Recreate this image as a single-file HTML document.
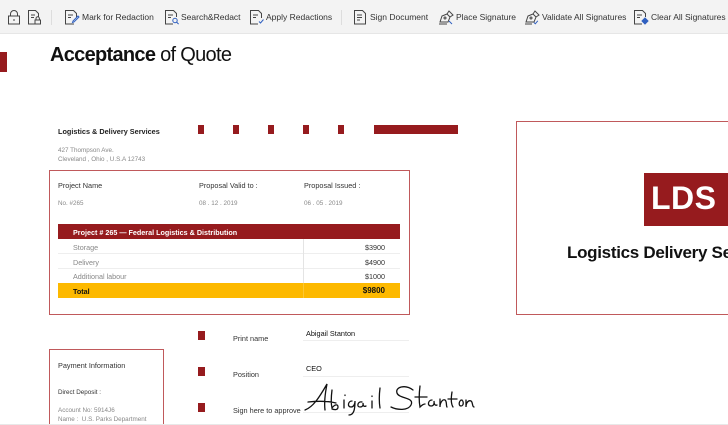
<!DOCTYPE html>
<html style="overflow:hidden"><head><meta charset="utf-8"><style>
*{margin:0;padding:0;box-sizing:border-box}
html,body{width:728px;height:425px;overflow:hidden}
body{background:#fff;font-family:"Liberation Sans",sans-serif;position:relative;color:#222}
.tb{position:absolute;left:0;top:0;width:728px;height:34px;background:#f3f3f3;border-bottom:1px solid #e6e6e6}
.ti{position:absolute;top:12px;font-size:8.5px;color:#333;white-space:nowrap;font-family:"Liberation Sans",sans-serif}
.ic{position:absolute;top:9px}
.a{position:absolute;white-space:nowrap}
.r{position:absolute;background:#961b1e}
</style></head><body>
<div class="tb">
<svg class="ic" style="left:6px" width="16" height="16" viewBox="0 0 16 16" fill="none" stroke="#444" stroke-width="1"><path d="M4.5 7V5a3.5 3.5 0 0 1 7 0v2"/><rect x="2.5" y="7" width="11" height="8"/><path d="M8 10v2"/></svg>
<svg class="ic" style="left:26px" width="16" height="16" viewBox="0 0 16 16" fill="none" stroke="#444" stroke-width="1"><path d="M9 15H2.5V1.5h7l3 3V8"/><path d="M5 6h4M5 8.5h3"/><rect x="9" y="11" width="5.5" height="4"/><path d="M10 11V9.5a1.7 1.7 0 0 1 3.4 0V11"/></svg>
<div style="position:absolute;left:51px;top:10px;width:1px;height:15px;background:#ddd"></div>
<svg class="ic" style="left:64px" width="16" height="16" viewBox="0 0 16 16" fill="none" stroke="#444" stroke-width="1"><path d="M10 15H1.5V1.5h8l3 3V8"/><path d="M4 6h5M4 8.5h3"/><path d="M15 8l-5 5-1.5.5.5-1.5 5-5z" stroke="#3060c0"/></svg>
<span class="ti" style="left:82px">Mark for Redaction</span>
<svg class="ic" style="left:164px" width="16" height="16" viewBox="0 0 16 16" fill="none" stroke="#444" stroke-width="1"><path d="M9 15H1.5V1.5h8l3 3V8"/><path d="M4 6h5M4 8.5h3"/><circle cx="11" cy="11.5" r="2.2" stroke="#3060c0"/><path d="M12.6 13.1l2 2" stroke="#3060c0"/></svg>
<span class="ti" style="left:181px">Search&amp;Redact</span>
<svg class="ic" style="left:249px" width="16" height="16" viewBox="0 0 16 16" fill="none" stroke="#444" stroke-width="1"><path d="M9 15H1.5V1.5h8l3 3V9"/><path d="M4 6h5M4 8.5h3"/><path d="M10 12.5l1.5 1.5 3-3.5" stroke="#3060c0"/></svg>
<span class="ti" style="left:266px">Apply Redactions</span>
<div style="position:absolute;left:341px;top:10px;width:1px;height:15px;background:#ddd"></div>
<svg class="ic" style="left:353px" width="16" height="16" viewBox="0 0 16 16" fill="none" stroke="#444" stroke-width="1"><path d="M12.5 15H1.5V1.5h8l3 3z"/><path d="M4 6h5M4 8.5h5M4 11h3"/></svg>
<span class="ti" style="left:370px">Sign Document</span>
<svg class="ic" style="left:438px" width="16" height="16" viewBox="0 0 16 16" fill="none" stroke="#444" stroke-width="1"><path d="M2 13l2-6 5-2 3 3-2 5z"/><circle cx="7" cy="9" r="1"/><path d="M9 5l2-3 4 4-3 2M1 15h8"/><path d="M11 12l3 3" stroke="#3060c0"/></svg>
<span class="ti" style="left:456px">Place Signature</span>
<svg class="ic" style="left:524px" width="16" height="16" viewBox="0 0 16 16" fill="none" stroke="#444" stroke-width="1"><path d="M2 13l2-6 5-2 3 3-2 5z"/><circle cx="7" cy="9" r="1"/><path d="M9 5l2-3 4 4-3 2M1 15h7"/><path d="M10 13.5l1.3 1.3 2.5-3" stroke="#3060c0"/></svg>
<span class="ti" style="left:542px">Validate All Signatures</span>
<svg class="ic" style="left:633px" width="16" height="16" viewBox="0 0 16 16" fill="none" stroke="#444" stroke-width="1"><path d="M9 15H1.5V1.5h8l3 3V8"/><path d="M4 6h5M4 8.5h3"/><path d="M9 12l3-3 3 3-3 3z" fill="#3060c0" stroke="#3060c0"/></svg>
<span class="ti" style="left:651px">Clear All Signatures</span>
</div>

<div class="r" style="left:0;top:52px;width:7px;height:20px"></div>
<div class="a" style="left:50px;top:44px;font-size:20px;color:#111;letter-spacing:-0.7px"><b>Acceptance</b> of Quote</div>

<div class="a" style="left:58px;top:127px;font-size:7.3px;font-weight:bold">Logistics &amp; Delivery Services</div>
<div class="r" style="left:198px;top:125px;width:6px;height:9px"></div>
<div class="r" style="left:233px;top:125px;width:6px;height:9px"></div>
<div class="r" style="left:268px;top:125px;width:6px;height:9px"></div>
<div class="r" style="left:303px;top:125px;width:6px;height:9px"></div>
<div class="r" style="left:338px;top:125px;width:6px;height:9px"></div>
<div class="r" style="left:374px;top:125px;width:84px;height:9px"></div>
<div class="a" style="left:58px;top:146px;font-size:6.3px;color:#888;line-height:9px">427 Thompson Ave.<br>Cleveland , Ohio , U.S.A 12743</div>

<div class="a" style="left:49px;top:170px;width:361px;height:145px;border:1px solid #c0595b"></div>
<div class="a" style="left:58px;top:181px;font-size:7.3px;color:#333">Project Name</div>
<div class="a" style="left:199px;top:181px;font-size:7.3px;color:#333">Proposal Valid to :</div>
<div class="a" style="left:304px;top:181px;font-size:7.3px;color:#333">Proposal Issued :</div>
<div class="a" style="left:58px;top:200px;font-size:6.3px;color:#888">No. #265</div>
<div class="a" style="left:199px;top:200px;font-size:6.3px;color:#888">08 . 12 . 2019</div>
<div class="a" style="left:304px;top:200px;font-size:6.3px;color:#888">06 . 05 . 2019</div>

<div class="r" style="left:58px;top:224px;width:342px;height:15px"></div>
<div class="a" style="left:73px;top:228px;font-size:7.2px;color:#fff;font-weight:bold">Project # 265 — Federal Logistics &amp; Distribution</div>
<div class="a" style="left:58px;top:239px;width:342px;height:59px">
<div style="height:15px;border-bottom:1px solid #eee"></div>
<div style="height:15px;border-bottom:1px solid #eee"></div>
<div style="height:14px"></div>
</div>
<div class="a" style="left:303px;top:239px;width:1px;height:44px;background:#e4e4e4"></div>
<div class="a" style="left:73px;top:243px;font-size:7.2px;color:#888">Storage</div>
<div class="a" style="left:73px;top:258px;font-size:7.2px;color:#888">Delivery</div>
<div class="a" style="left:73px;top:272px;font-size:7.2px;color:#888">Additional labour</div>
<div class="a" style="left:345px;top:243px;width:40px;text-align:right;font-size:7.2px;color:#333">$3900</div>
<div class="a" style="left:345px;top:258px;width:40px;text-align:right;font-size:7.2px;color:#333">$4900</div>
<div class="a" style="left:345px;top:272px;width:40px;text-align:right;font-size:7.2px;color:#333">$1000</div>
<div class="a" style="left:58px;top:283px;width:342px;height:15px;background:#fdb900"></div>
<div class="a" style="left:303px;top:283px;width:1px;height:15px;background:#fff3"></div>
<div class="a" style="left:73px;top:287px;font-size:7.2px;font-weight:bold;color:#111">Total</div>
<div class="a" style="left:335px;top:286px;width:50px;text-align:right;font-size:8px;font-weight:bold;color:#111">$9800</div>

<div class="a" style="left:516px;top:121px;width:212px;height:194px;border:1px solid #c0595b;border-right:none;overflow:hidden">
<div class="r" style="left:127px;top:51px;width:90px;height:53px"></div>
<div class="a" style="left:134px;top:58px;font-size:32px;font-weight:bold;color:#fff;letter-spacing:0.5px">LDS</div>
<div class="a" style="left:50px;top:121px;font-size:17px;font-weight:bold;color:#111;letter-spacing:-0.3px">Logistics Delivery Services</div>
</div>

<div class="a" style="left:49px;top:349px;width:115px;height:90px;border:1px solid #c0595b"></div>
<div class="a" style="left:58px;top:361px;font-size:7.3px;color:#333">Payment Information</div>
<div class="a" style="left:58px;top:389px;font-size:6.3px;color:#333">Direct Deposit :</div>
<div class="a" style="left:58px;top:406px;font-size:6.3px;color:#888;line-height:9px">Account No: 5914J6<br>Name :&nbsp; U.S. Parks Department</div>

<div class="r" style="left:198px;top:331px;width:7px;height:9px"></div>
<div class="r" style="left:198px;top:367px;width:7px;height:9px"></div>
<div class="r" style="left:198px;top:403px;width:7px;height:9px"></div>
<div class="a" style="left:233px;top:334px;font-size:7.3px;color:#333">Print name</div>
<div class="a" style="left:233px;top:370px;font-size:7.3px;color:#333">Position</div>
<div class="a" style="left:233px;top:406px;font-size:7.3px;color:#333">Sign here to approve</div>
<div class="a" style="left:306px;top:329px;font-size:7.3px;color:#111">Abigail Stanton</div>
<div class="a" style="left:306px;top:364px;font-size:7.3px;color:#111">CEO</div>
<div class="a" style="left:303px;top:340px;width:106px;height:1px;background:#eee"></div>
<div class="a" style="left:303px;top:376px;width:106px;height:1px;background:#eee"></div>
<div class="a" style="left:303px;top:412px;width:106px;height:1px;background:#eee"></div>
<svg class="a" style="left:300px;top:380px" width="180" height="40" viewBox="0 0 180 40" fill="none" stroke="#111" stroke-width="1.3" stroke-linecap="round">
<path d="M5 30c8-3 14-12 22-26c-2 10-3 18-2 26M8 22c10-1 20-1 28 1M32 10c-1 8-1 14 0 18c3-4 6-4 6-1s-3 3-6 2M44 20v8M45 15v0.5M52 21c-4 0-5 6-1 6s4-6 4-6c0 8-1 14-6 14M62 22c-4-1-6 5-2 5s3-4 3-4c0 3 1 4 3 3M72 21v7M72 16v.5M80 8c-1 8-1 14 0 20"/>
<path d="M113 10c-8-6-18-3-16 3s18 4 14 12c-3 6-14 5-20 2M120 6c-1 8-1 16 0 21c2-2 4-3 5-3M115 17h12M132 20c-4 0-5 6-1 6s3-5 3-5c0 3 1 5 3 4M140 19v8c0-5 3-8 5-7c2 1 1 6 2 7M152 12c-1 6-1 12 1 15M148 19h9M162 20c-3 0-4 6-1 6s3-6 0-6M166 20v7c0-5 3-7 5-6s1 6 3 6"/>
</svg>
<div class="a" style="left:0;top:424px;width:728px;height:1px;background:#e8e8e8"></div>
</body></html>
